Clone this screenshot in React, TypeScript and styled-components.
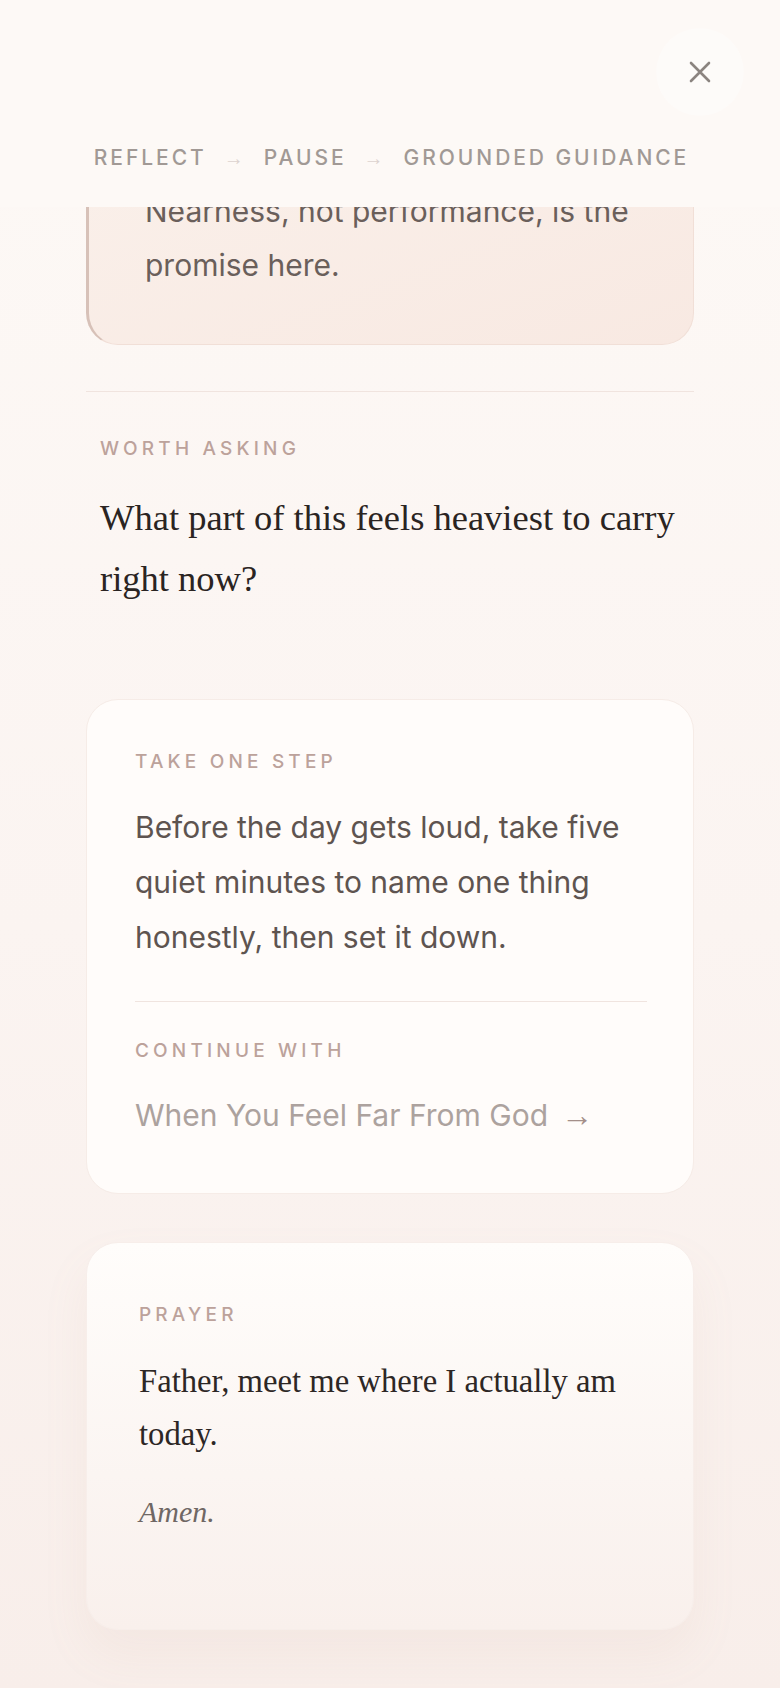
import { Fragment } from "react";
import styled, { createGlobalStyle } from "styled-components";

const GlobalStyle = createGlobalStyle`
  html, body {
    margin: 0;
    padding: 0;
  }
  body {
    font-family: Inter, "Noto Sans", sans-serif;
    background: linear-gradient(180deg, #fdf9f6 0%, #fbf4f1 55%, #f8eeea 100%);
    min-height: 100vh;
  }
  * {
    box-sizing: border-box;
  }
`;

const Page = styled.div`
  height: 100vh;
  display: flex;
  flex-direction: column;
  overflow: hidden;
`;

const Header = styled.header`
  background: #fdf9f6;
  padding: 28px 36px 34px;
  display: flex;
  flex-direction: column;
  gap: 27px;
  position: relative;
  z-index: 2;
`;

const CloseRow = styled.div`
  display: flex;
  justify-content: flex-end;
`;

const CloseButton = styled.button`
  width: 88px;
  height: 88px;
  border-radius: 50%;
  border: none;
  background: rgba(255, 255, 255, 0.3);
  color: #8b8480;
  display: flex;
  align-items: center;
  justify-content: center;
  cursor: pointer;
  padding: 0;
`;

const Stepper = styled.nav`
  display: flex;
  justify-content: center;
  align-items: center;
  gap: 20px;
  line-height: 30px;
`;

const Step = styled.span`
  font-size: 21px;
  font-weight: 500;
  letter-spacing: 0.14em;
  color: #a19995;
  margin-right: -0.14em;
`;

const Arrow = styled.span<{ $size: number; $color: string; $gap?: number }>`
  font-family: "Liberation Sans", "DejaVu Sans", sans-serif;
  font-size: ${(p) => p.$size}px;
  color: ${(p) => p.$color};
  margin-left: ${(p) => p.$gap ?? 0}px;
`;

const Viewport = styled.main`
  flex: 1;
  overflow: hidden;
`;

const Column = styled.div`
  width: 608px;
  margin: -73px auto 0;
  display: flex;
  flex-direction: column;
  padding-bottom: 60px;
`;

const ReflectCard = styled.section`
  background: linear-gradient(160deg, #faf0ea 0%, #f8e9e2 100%);
  border: 1px solid #f1dfd7;
  border-left: 3px solid #d7c1b8;
  border-radius: 32px;
  padding: 49px 52px 52px 56px;
`;

const ReflectText = styled.p`
  margin: 0;
  font-size: 30px;
  line-height: 54px;
  color: #6a5f5b;
`;

const Divider = styled.hr<{ $spaceTop?: number; $spaceBottom?: number }>`
  border: none;
  height: 1px;
  background: #f0e4df;
  margin: ${(p) => p.$spaceTop ?? 0}px 0 ${(p) => p.$spaceBottom ?? 0}px;
`;

const AskSection = styled.section`
  padding: 45px 14px 0;
  margin-bottom: 90px;
`;

const Label = styled.div`
  font-size: 19px;
  font-weight: 500;
  letter-spacing: 0.22em;
  line-height: 24px;
  color: #bca29b;
  text-transform: uppercase;
`;

const Question = styled.p`
  margin: 26px 0 0;
  font-family: "Liberation Serif", "Times New Roman", serif;
  font-size: 36.5px;
  line-height: 61px;
  color: #2a2422;
`;

const StepCard = styled.section`
  background: #fffcfa;
  border: 1px solid #f6ece7;
  border-radius: 32px;
  padding: 50px 46px 51px 48px;
  margin-bottom: 48px;
`;

const Body = styled.p`
  margin: 26px 0 0;
  font-size: 30px;
  line-height: 55px;
  color: #5e5450;
`;

const ContinueLink = styled.a`
  display: block;
  margin-top: 25px;
  font-size: 30px;
  line-height: 54px;
  color: #aca29e;
  text-decoration: none;
`;

const PrayerCard = styled.section`
  background: linear-gradient(180deg, #fffdfb 0%, #fbf5f2 60%, #f9f0ec 100%);
  border: 1px solid #f7eeea;
  border-radius: 32px;
  padding: 60px 52px 97px;
  box-shadow: 0 24px 48px rgba(190, 150, 130, 0.08);
`;

const PrayerText = styled.p`
  margin: 28px 0 0;
  font-family: "Liberation Serif", "Times New Roman", serif;
  font-size: 32.7px;
  line-height: 53px;
  color: #2d2725;
`;

const Amen = styled.p`
  margin: 31px 0 0;
  font-family: "Liberation Serif", "Times New Roman", serif;
  font-style: italic;
  font-size: 30px;
  line-height: 40px;
  color: #6f6764;
`;

function CloseIcon() {
  return (
    <svg width="22" height="22" viewBox="0 0 22 22" fill="none">
      <path
        d="M2 2 L20 20 M20 2 L2 20"
        stroke="currentColor"
        strokeWidth="2.6"
        strokeLinecap="round"
      />
    </svg>
  );
}

const steps = ["Reflect", "Pause", "Grounded Guidance"];

export default function App() {
  return (
    <>
      <GlobalStyle />
      <Page>
        <Header>
          <CloseRow>
            <CloseButton aria-label="Close">
              <CloseIcon />
            </CloseButton>
          </CloseRow>
          <Stepper>
            {steps.map((s, i) => (
              <Fragment key={s}>
                {i > 0 && (
                  <Arrow $size={20} $color="#dcd3cf">
                    →
                  </Arrow>
                )}
                <Step>{s.toUpperCase()}</Step>
              </Fragment>
            ))}
          </Stepper>
        </Header>

        <Viewport>
          <Column>
            <ReflectCard>
              <ReflectText>
                Nearness, not performance, is the promise here.
              </ReflectText>
            </ReflectCard>

            <Divider $spaceTop={46} />

            <AskSection>
              <Label>Worth asking</Label>
              <Question>What part of this feels heaviest to carry right now?</Question>
            </AskSection>

            <StepCard>
              <Label>Take one step</Label>
              <Body>
                Before the day gets loud, take five quiet minutes to name one
                thing honestly, then set it down.
              </Body>
              <Divider $spaceTop={36} $spaceBottom={37} />
              <Label>Continue with</Label>
              <ContinueLink href="#">
                When You Feel Far From God
                <Arrow $size={32} $color="#a48f89" $gap={13}>
                  →
                </Arrow>
              </ContinueLink>
            </StepCard>

            <PrayerCard>
              <Label>Prayer</Label>
              <PrayerText>Father, meet me where I actually am today.</PrayerText>
              <Amen>Amen.</Amen>
            </PrayerCard>
          </Column>
        </Viewport>
      </Page>
    </>
  );
}
